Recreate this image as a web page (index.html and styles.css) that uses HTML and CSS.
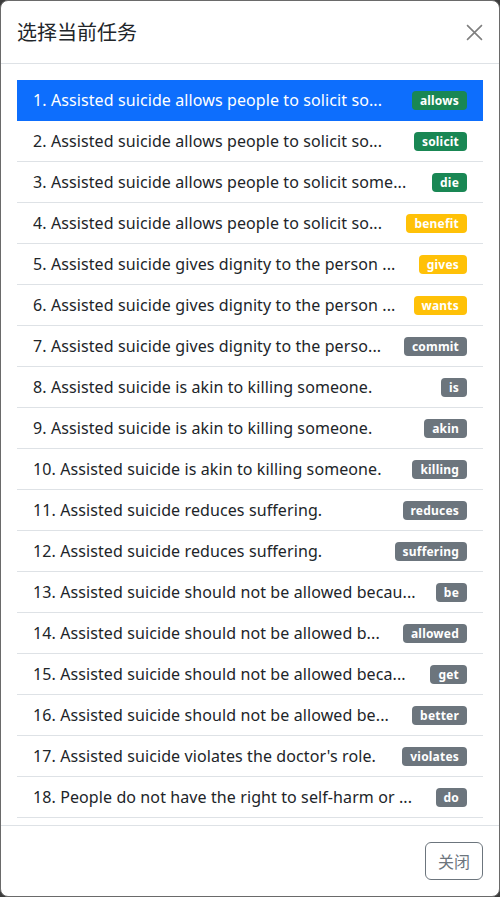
FILE: index.html
```html
<!DOCTYPE html>
<html lang="zh">
<head>
<meta charset="utf-8">
<title>选择当前任务</title>
<link rel="stylesheet" href="styles.css">
</head>
<body>
<div class="modal">
  <div class="modal-header">
    <h5 class="modal-title">选择当前任务</h5>
    <button class="btn-close" type="button" aria-label="Close">
      <svg viewBox="0 0 16 16" width="17" height="17"><path d="M1 1L15 15M15 1L1 15" stroke="currentColor" stroke-width="1.5" fill="none"/></svg>
    </button>
  </div>
  <div class="modal-body">
    <ul class="list-group">
      <li class="item active"><span class="txt">1. Assisted suicide allows people to solicit so...</span><span class="badge green">allows</span></li>
      <li class="item"><span class="txt">2. Assisted suicide allows people to solicit so...</span><span class="badge green">solicit</span></li>
      <li class="item"><span class="txt">3. Assisted suicide allows people to solicit some...</span><span class="badge green">die</span></li>
      <li class="item"><span class="txt">4. Assisted suicide allows people to solicit so...</span><span class="badge yellow">benefit</span></li>
      <li class="item"><span class="txt">5. Assisted suicide gives dignity to the person ...</span><span class="badge yellow">gives</span></li>
      <li class="item"><span class="txt">6. Assisted suicide gives dignity to the person ...</span><span class="badge yellow">wants</span></li>
      <li class="item"><span class="txt">7. Assisted suicide gives dignity to the perso...</span><span class="badge gray">commit</span></li>
      <li class="item"><span class="txt">8. Assisted suicide is akin to killing someone.</span><span class="badge gray">is</span></li>
      <li class="item"><span class="txt">9. Assisted suicide is akin to killing someone.</span><span class="badge gray">akin</span></li>
      <li class="item"><span class="txt">10. Assisted suicide is akin to killing someone.</span><span class="badge gray">killing</span></li>
      <li class="item"><span class="txt">11. Assisted suicide reduces suffering.</span><span class="badge gray">reduces</span></li>
      <li class="item"><span class="txt">12. Assisted suicide reduces suffering.</span><span class="badge gray">suffering</span></li>
      <li class="item"><span class="txt">13. Assisted suicide should not be allowed becau...</span><span class="badge gray">be</span></li>
      <li class="item"><span class="txt">14. Assisted suicide should not be allowed b...</span><span class="badge gray">allowed</span></li>
      <li class="item"><span class="txt">15. Assisted suicide should not be allowed beca...</span><span class="badge gray">get</span></li>
      <li class="item"><span class="txt">16. Assisted suicide should not be allowed be...</span><span class="badge gray">better</span></li>
      <li class="item"><span class="txt">17. Assisted suicide violates the doctor's role.</span><span class="badge gray">violates</span></li>
      <li class="item"><span class="txt">18. People do not have the right to self-harm or ...</span><span class="badge gray">do</span></li>
    </ul>
  </div>
  <div class="modal-footer">
    <button class="btn-outline" type="button">关闭</button>
  </div>
</div>
</body>
</html>
```
FILE: styles.css
```css
* { box-sizing: border-box; }
html, body { margin: 0; padding: 0; }
html { background: #3c3c3c; }
body {
  font-family: "Noto Sans", "Noto Sans CJK SC", sans-serif;
  font-size: 16px;
  line-height: 1.5;
  color: #212529;
}
.modal {
  width: 500px;
  height: 897px;
  background: #fff;
  border: 1px solid #6a6a6a;
  border-radius: 8px;
  display: flex;
  flex-direction: column;
  overflow: hidden;
}
.modal-header {
  display: flex;
  align-items: center;
  padding: 16px;
  border-bottom: 1px solid #dee2e6;
  flex-shrink: 0;
}
.modal-title {
  margin: 0;
  font-family: "Noto Sans CJK SC", sans-serif;
  font-size: 20px;
  font-weight: 400;
  line-height: 1.5;
  color: #212529;
}
.btn-close {
  margin-left: auto;
  width: 25px;
  height: 25px;
  padding: 4px;
  margin-right: -4px;
  border: 0;
  background: transparent;
  color: #7f7f7f;
  display: flex;
  align-items: center;
  justify-content: center;
}
.modal-body {
  flex: 1;
  min-height: 0;
  overflow: hidden;
  padding: 16px 16px 0;
}
.list-group {
  list-style: none;
  margin: 0;
  padding: 0;
}
.item {
  display: flex;
  align-items: center;
  padding: 8px 16px;
  border-bottom: 1px solid #dee2e6;
  color: #212529;
}
.item.active {
  background: #0d6efd;
  color: #fff;
  border-bottom-color: #0d6efd;
}
.txt {
  flex: 1;
  min-width: 0;
  white-space: nowrap;
  overflow: hidden;
  text-overflow: ellipsis;
  margin-right: 12px;
  letter-spacing: 0.1px;
}
.badge {
  flex-shrink: 0;
  display: inline-block;
  padding: 4px 8px 3px;
  font-family: "Noto Sans", sans-serif;
  font-size: 12px;
  font-weight: 700;
  line-height: 1;
  letter-spacing: 0.2px;
  color: #fff;
  border-radius: 4px;
  white-space: nowrap;
}
.badge.green { background: #198754; }
.badge.yellow { background: #ffc107; }
.badge.gray { background: #6c757d; }
.modal-footer {
  flex-shrink: 0;
  display: flex;
  justify-content: flex-end;
  align-items: center;
  padding: 12px;
  border-top: 1px solid #dee2e6;
}
.btn-outline {
  margin: 4px;
  padding: 6px 12px;
  font-family: "Noto Sans CJK SC", sans-serif;
  font-size: 16px;
  line-height: 24px;
  color: #6c757d;
  background: transparent;
  border: 1px solid #6c757d;
  border-radius: 6px;
}
```
